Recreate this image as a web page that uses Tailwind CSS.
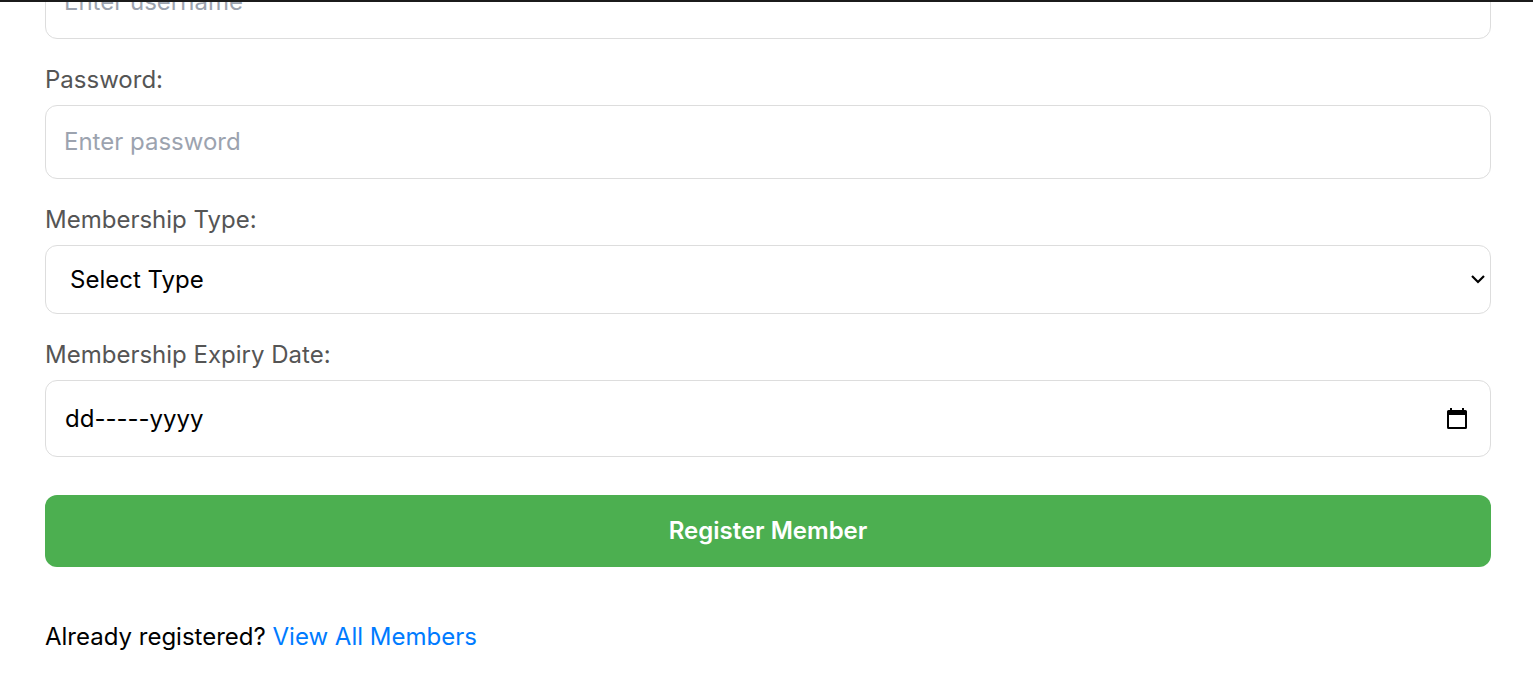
<!DOCTYPE html>
<html lang="en">
<head>
<meta charset="utf-8">
<meta name="viewport" content="width=device-width, initial-scale=1">
<title>Register Member</title>
<script src="https://cdn.jsdelivr.net/npm/@tailwindcss/browser@4"></script>
</head>
<body class="bg-white font-['Inter',sans-serif] text-2xl/9 text-black">
<main class="overflow-hidden border-t-2 border-[#1b1b1b] pr-[42px] pb-6 pl-[45px]">
  <form class="-mt-[37px] flex flex-col">
    <input type="text" aria-label="Username" placeholder="Enter username" class="h-[74px] w-full rounded-xl border border-[#ddd] px-[18px] pb-0.5 placeholder:text-[#9ca3af]">

    <label for="password" class="mt-[23px] mb-[7px] text-[#555]">Password:</label>
    <input id="password" type="password" placeholder="Enter password" class="h-[74px] w-full rounded-xl border border-[#ddd] px-[18px] pb-0.5 placeholder:text-[#9ca3af]">

    <label for="type" class="mt-[23px] mb-[7px] text-[#555]">Membership Type:</label>
    <div class="relative">
      <select id="type" class="block h-[69px] w-full appearance-none rounded-xl border border-[#ddd] bg-white px-6">
        <option>Select Type</option>
        <option>Monthly</option>
        <option>Yearly</option>
      </select>
      <svg class="pointer-events-none absolute inset-y-0 right-1.5 my-auto h-3 w-3.5" viewBox="0 0 14 12" fill="none" stroke="#000" stroke-width="2.200" aria-hidden="true"><path d="M1 2l6 6 6-6"/></svg>
    </div>

    <label for="expiry" class="mt-[23px] mb-[7px] text-[#555]">Membership Expiry Date:</label>
    <div class="relative">
      <input id="expiry" type="text" placeholder="dd-----yyyy" class="block h-[77px] w-full rounded-xl border border-[#ddd] pr-16 pl-[19px] placeholder:text-black">
      <button type="button" aria-label="Choose date" class="absolute inset-y-0 right-6 my-auto h-[21px] w-5">
        <svg class="block h-[21px] w-5" viewBox="0 0 20 21" aria-hidden="true"><path fill-rule="evenodd" d="M3 0h2v2h10V0h2v2h1.500a1.500 1.500 0 0 1 1.500 1.500v16a1.500 1.500 0 0 1-1.500 1.500h-17A1.500 1.500 0 0 1 0 19.500v-16A1.500 1.500 0 0 1 1.500 2H3zM2 7v12h16V7z"/></svg>
      </button>
    </div>

    <button type="submit" class="mt-[38px] h-[72px] rounded-xl bg-[#4caf50] font-semibold text-white">Register Member</button>
  </form>
  <p class="mt-[52px]">Already registered? <a href="#members" class="text-[#007bff]">View All Members</a></p>
</main>
</body>
</html>
